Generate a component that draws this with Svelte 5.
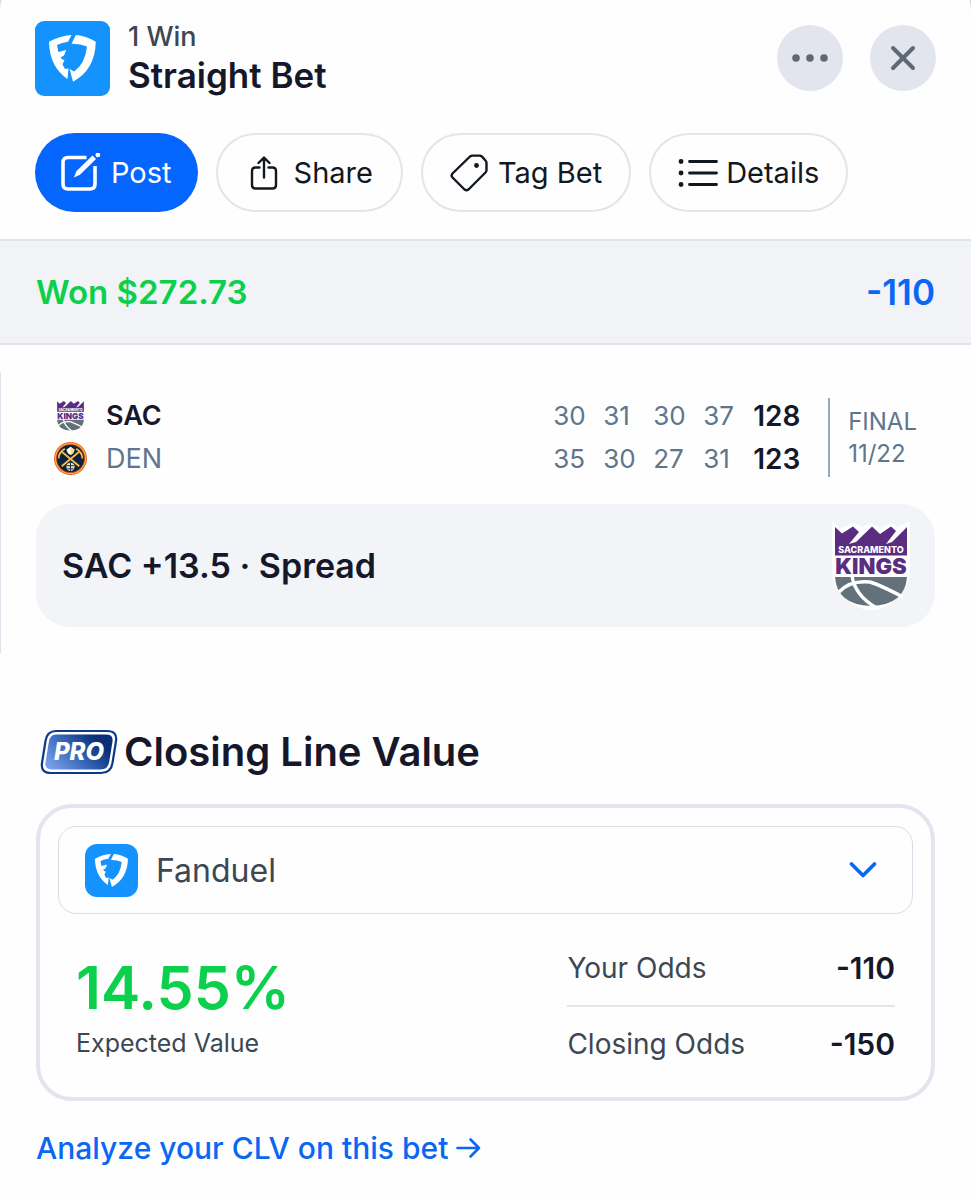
<script>
  const rows = [
    { team: 'SAC', logo: 'kings', won: true, quarters: [30, 31, 30, 37], total: 128 },
    { team: 'DEN', logo: 'nuggets', won: false, quarters: [35, 30, 27, 31], total: 123 }
  ];
  const odds = [
    { label: 'Your Odds', value: '-110' },
    { label: 'Closing Odds', value: '-150' }
  ];
  let book = $state('Fanduel');
</script>

{#snippet fanduel()}
  <svg class="fanduel" viewBox="0 0 75 75" aria-hidden="true">
    <rect width="75" height="75" fill="#1493ff" />
    <g fill="#fff">
      <path d="M14 20.800Q24 15 36.500 14L33 20.800Q27 21.500 22 24L23.300 31L31.300 29L29 34.500L25.500 36.500L27.500 38.500L29.500 39L27.500 43.500L30 48L33.500 47.500L32.500 58Q14.500 46 14 20.800Z" />
      <path d="M40.8 14Q52 15 60.8 20.8Q60 49 38 60.7L34.6 48L39 50.5Q50 43 52 25.5Q45 22.5 36.6 22.8Z" />
    </g>
  </svg>
{/snippet}

{#snippet kings()}
  <svg class="kings" viewBox="0 0 78 90" aria-hidden="true">
    <path d="M0 0L9 7L21 2L30 6L40 2L49 7L59 2L66 6L78 0V50Q76 70 62 80Q50 89 39 89Q28 89 16 80Q2 70 0 50Z" fill="#fff" />
    <path d="M3 6L10 12.500L21 5.500L27 11L17 23L24 21L40 5.500L48 13L59 5.500L64 10L54 23L60 21L75 6V34.500H3Z" fill="#5a2d81" />
    <text x="39" y="32" font-size="9" font-weight="800" text-anchor="middle" fill="#fff">SACRAMENTO</text>
    <text x="39" y="53" font-size="22" font-weight="900" text-anchor="middle" fill="#5a2d81">KINGS</text>
    <path d="M3 56H75Q73 84 39 85Q5 84 3 56Z" fill="#63727a" />
    <path d="M7 71Q18 59 38 61Q48 64 71 76M20 55Q23 74 43 86" fill="none" stroke="#fff" stroke-width="3.4" />
  </svg>
{/snippet}

{#snippet nuggets()}
  <svg class="nuggets" viewBox="0 0 32 32" aria-hidden="true">
    <circle cx="16" cy="16" r="16" fill="#e8632b" />
    <circle cx="16" cy="16" r="15" fill="#fdb927" />
    <circle cx="16" cy="16" r="13.9" fill="#a6322f" />
    <circle cx="16" cy="16" r="13.1" fill="#0e2240" />
    <path d="M7 9L24.5 23.5M25 9L7.5 23.5" stroke="#f3bd48" stroke-width="1.8" />
    <path d="M4.500 16Q4.500 10 10.500 6.500M27.500 16Q27.500 10 21.500 6.500" fill="none" stroke="#f3bd48" stroke-width="1.7" />
    <path d="M16 4.500L20 7.500L18.500 11L16 12.500L13.500 11L12 7.500Z" fill="#fff" />
    <path d="M16 4.500L20 7.500L18.500 11L16 12.500Z" fill="#fdd98a" />
    <circle cx="16" cy="24" r="4" fill="#f4e3ad" />
    <path d="M12.500 23H19.500M16 20V28M13 26H19" stroke="#0e2240" stroke-width=".9" />
  </svg>
{/snippet}

<main class="sheet">
  <header class="top">
    <div class="logo">{@render fanduel()}</div>
    <div class="titles">
      <p>1 Win</p>
      <h1>Straight Bet</h1>
    </div>
    <button class="round" type="button" aria-label="More">
      <svg width="36" height="8" viewBox="0 0 36 8" fill="#5f6875"><circle cx="4" cy="4" r="3.800" /><circle cx="18" cy="4" r="3.800" /><circle cx="32" cy="4" r="3.800" /></svg>
    </button>
    <button class="round" type="button" aria-label="Close">
      <svg width="26" height="26" viewBox="0 0 26 26" fill="none" stroke="#5f6875" stroke-width="4" stroke-linecap="round"><path d="M3 3L23 23M23 3L3 23" /></svg>
    </button>
  </header>

  <nav class="actions" aria-label="Bet actions">
    <button class="pill primary" type="button">
      <svg width="40" height="40" viewBox="0 0 40 40" fill="none" stroke="#fff">
        <path d="M25.500 4.500H7Q2 4.500 2 9.500V31Q2 36 7 36H29Q34 36 34 31V13" stroke-width="3.600" />
        <path d="M12.800 24.600L15.500 18L31.500 2.500L35 6L19 21.800Z" fill="#fff" stroke="none" />
        <path d="M36.800 1.900h.1" stroke-width="4.600" stroke-linecap="round" />
      </svg>
      Post
    </button>
    <button class="pill share" type="button">
      <svg width="28" height="34" viewBox="0 0 28 34" fill="none" stroke="#111820" stroke-width="2.400" stroke-linecap="round" stroke-linejoin="round">
        <path d="M9.500 11.500H5.500Q2 11.500 2 15V29Q2 32.500 5.500 32.500H22.500Q26 32.500 26 29V15Q26 11.500 22.500 11.500H18.500M14 21.500V2M8.500 7L14 1.600L19.500 7" />
      </svg>
      Share
    </button>
    <button class="pill" type="button">
      <svg width="38" height="38" viewBox="0 0 38 38" fill="none" stroke="#111820" stroke-width="2.400" stroke-linejoin="round">
        <path d="M20 2.500Q21 1.600 22.500 1.600H29.500Q31 1.600 32 2.600L35.500 6.500Q36.500 7.500 36.500 9V16Q36.500 17.500 35.500 18.500L18.500 35.500Q16.500 37 14.500 35.500L2.500 23.500Q.8 21.500 2.500 19.500Z" />
        <circle cx="26.500" cy="11.500" r="2.400" fill="#111820" stroke="none" />
      </svg>
      Tag Bet
    </button>
    <button class="pill details" type="button">
      <svg width="40" height="30" viewBox="0 0 40 30" fill="none" stroke="#111820" stroke-width="2.800" stroke-linecap="round">
        <path d="M11.500 3.500H38.500M11.500 15H38.500M11.500 26.500H38.500" />
        <path d="M3 3.500h.1M3 15h.1M3 26.500h.1" stroke-width="4.800" />
      </svg>
      Details
    </button>
  </nav>

  <section class="result">
    <strong class="won">Won $272.73</strong>
    <strong class="price">-110</strong>
  </section>

  <section class="event">
    <div class="score">
      <table>
        <tbody>
          {#each rows as row}
            <tr class:won-row={row.won}>
              <td class="mark">{#if row.logo === 'kings'}{@render kings()}{:else}{@render nuggets()}{/if}</td>
              <th scope="row">{row.team}</th>
              {#each row.quarters as q}<td class="quarter">{q}</td>{/each}
              <td class="total">{row.total}</td>
            </tr>
          {/each}
        </tbody>
      </table>
      <p class="status">FINAL<br />11/22</p>
    </div>
    <div class="pick">
      <h2>SAC +13.5 · Spread</h2>
      {@render kings()}
    </div>
  </section>

  <section class="clv">
    <div class="clv-title">
      <svg width="78" height="46" viewBox="0 0 78 46" aria-label="PRO" role="img">
        <defs>
          <linearGradient id="pro" x1="0" y1=".75" x2="1" y2=".25"><stop offset="0" stop-color="#779de8" /><stop offset=".45" stop-color="#3765b5" /><stop offset=".85" stop-color="#0a2f78" /></linearGradient>
        </defs>
        <path d="M16 2H67Q77.500 2 76 12L72.500 34Q71 44 61 44H11Q.5 44 2 34L5.500 12Q7 2 16 2Z" fill="#fff" stroke="#0c3a86" stroke-width="2.200" />
        <path d="M16 5.500H66Q73.500 5.500 72.500 12.500L69.200 33Q68 40.500 60.500 40.500H12Q4.500 40.500 5.500 33.500L8.800 13Q10 5.500 16 5.500Z" fill="url(#pro)" />
        <text x="39" y="31" font-size="24" font-weight="800" font-style="italic" text-anchor="middle" fill="#fff">PRO</text>
      </svg>
      <h2>Closing Line Value</h2>
    </div>

    <div class="card">
      <div class="picker">
        <select aria-label="Sportsbook" bind:value={book}>
          <option>Fanduel</option>
        </select>
        <span class="book-logo">{@render fanduel()}</span>
        <svg class="chevron" width="28" height="16" viewBox="0 0 28 16" fill="none" stroke="#0a66f5" stroke-width="3.600" stroke-linecap="round" stroke-linejoin="round"><path d="M2.500 2L14 13.500L25.500 2" /></svg>
      </div>
      <div class="figures">
        <div class="ev">
          <strong>14.55%</strong>
          <span>Expected Value</span>
        </div>
        <dl>
          {#each odds as o}
            <div><dt>{o.label}</dt><dd>{o.value}</dd></div>
          {/each}
        </dl>
      </div>
    </div>

    <a href="#clv">Analyze your CLV on this bet
      <svg width="25" height="22" viewBox="0 0 25 22" fill="none" stroke="currentColor" stroke-width="2.600" stroke-linecap="round" stroke-linejoin="round"><path d="M1.500 11H23M14.500 2.500L23 11L14.500 19.500" /></svg>
    </a>
  </section>
</main>

<style>
  :global(body) { background: #d5d7db; }
  .sheet {
    min-height: 100vh;
    box-sizing: border-box;
    background: #fefefe;
    border-radius: 2px 2px 0 0 / 14px 14px 0 0;
    color: #14182a;
    font-family: Inter, "Liberation Sans", sans-serif;
  }
  h1, h2, p, dl, dd { margin: 0; }
  button, select { font: inherit; color: inherit; }
  svg { display: block; flex: none; }
  h1, h2 { font-weight: 600; }

  .top { display: flex; align-items: center; padding: 20px 35px 0; }
  .logo { width: 75px; border-radius: 9px; overflow: hidden; }
  .titles { flex: 1; padding-left: 18px; }
  .titles p { font-size: 27px; line-height: 34px; font-weight: 500; color: #3c4754; }
  h1 { font-size: 35px; line-height: 42px; }
  .round {
    display: grid;
    place-items: center;
    width: 66px;
    height: 66px;
    margin-left: 27px;
    padding: 0;
    border: 0;
    border-radius: 50%;
    background: #e2e5ed;
  }

  .actions { display: flex; gap: 18px; padding: 37px 35px 27px; }
  .pill {
    display: flex;
    align-items: center;
    justify-content: center;
    gap: 10px;
    box-sizing: border-box;
    height: 79px;
    padding: 0 27px;
    border: 2px solid #e3e4ec;
    border-radius: 40px;
    background: none;
    color: #111820;
    font-size: 29px;
    white-space: nowrap;
  }
  .primary { padding: 0 26px; border: 0; background: #0565ff; color: #fff; }
  .share { gap: 16px; padding: 0 28px 0 32px; }
  .details { gap: 8px; }

  .result {
    display: flex;
    align-items: center;
    justify-content: space-between;
    padding: 28px 36px;
    border: solid #e1e4ea;
    border-width: 2px 0;
    background: #f1f3f7;
    font-size: 35px;
    line-height: 46px;
  }
  strong { font-weight: 600; }
  .won, .ev strong { color: #0ad04b; }
  .won { font-size: 33px; }
  .price { color: #0a66f5; }

  .event { margin-top: 27px; padding: 22px 36px 26px 35px; border-left: 1px solid #dfe2ea; }
  .score { display: flex; align-items: center; padding: 0 18px; }
  table { flex: 1; border-collapse: collapse; }
  td, th { height: 43px; padding: 0; font-weight: 400; color: #60758d; line-height: 32px; }
  .mark { width: 52px; }
  .mark .nuggets { width: 33px; }
  .mark .kings { width: 29px; margin-left: 2px; }
  th { text-align: left; font-size: 27px; }
  .quarter { width: 50px; font-size: 26px; }
  .total { width: 75px; font-size: 28px; }
  .total, .won-row th { font-weight: 600; color: #14182a; }
  .status {
    padding: 8px 0 7px 18px;
    border-left: 2px solid #98a7c2;
    color: #60758d;
    font-size: 24px;
    line-height: 32px;
  }
  .pick {
    display: flex;
    align-items: center;
    justify-content: space-between;
    margin-top: 24px;
    padding: 17px 25px 16px 26px;
    border-radius: 34px;
    background: #f2f4f8;
  }
  .pick h2 { font-size: 34px; line-height: 48px; }
  .pick .kings { width: 78px; }

  .clv { padding: 73px 36px 30px; }
  .clv-title { display: flex; align-items: center; gap: 6px; padding-left: 4px; }
  .clv-title h2 { font-size: 40px; line-height: 52px; }
  .card { margin-top: 26px; padding: 18px 18px 16px; border: 4px solid #e2e5ee; border-radius: 36px; }
  .picker { display: grid; align-items: center; }
  .picker > * { grid-area: 1 / 1; }
  .picker select {
    width: 100%;
    height: 88px;
    padding: 0 80px 0 97px;
    border: 1px solid #dadde8;
    border-radius: 18px;
    background: none;
    appearance: none;
    color: #3c4754;
    font-size: 32px;
  }
  .book-logo { width: 53px; margin-left: 27px; border-radius: 12px; overflow: hidden; pointer-events: none; }
  .chevron { justify-self: end; margin-right: 36px; pointer-events: none; }
  .figures { display: flex; justify-content: space-between; align-items: center; padding: 17px 18px 0; color: #3c4754; }
  .ev { display: grid; }
  .ev strong { font-size: 59px; line-height: 74px; }
  .ev span { font-size: 25px; line-height: 36px; }
  dl { flex: 0 0 40%; font-size: 28px; line-height: 38px; }
  dl div { display: flex; justify-content: space-between; padding: 18px 0; }
  dl div + div { border-top: 2px solid #e2e5ee; }
  dd { font-size: 30px; font-weight: 600; color: #14182a; }
  a {
    display: inline-flex;
    align-items: center;
    gap: 8px;
    margin-top: 27px;
    color: #0a66f5;
    font-size: 30px;
    font-weight: 500;
    line-height: 40px;
    text-decoration: none;
  }
</style>
